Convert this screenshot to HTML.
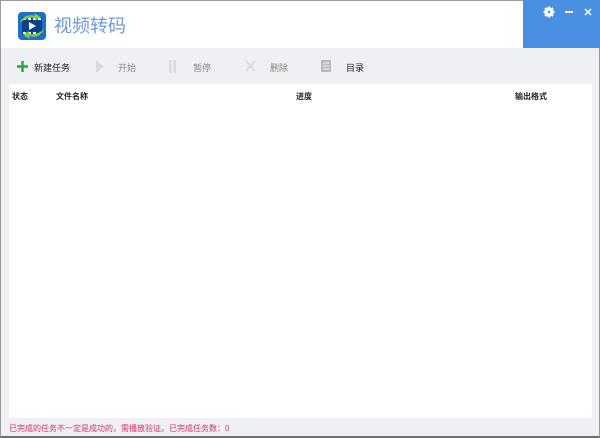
<!DOCTYPE html>
<html><head><meta charset="utf-8"><style>
*{margin:0;padding:0;box-sizing:border-box}
body{width:600px;height:438px;overflow:hidden;font-family:"Liberation Sans","Noto Sans CJK SC",sans-serif;background:#eef0f4;position:relative}
.win{position:absolute;left:0;top:0;width:600px;height:438px;border:1px solid #9a9a9a;border-bottom:2px solid #6f6f6f}
.top{position:absolute;left:1px;top:1px;width:598px;height:47px;background:#fff}
.blue{position:absolute;left:523px;top:0;width:77px;height:48px;background:#4a90e2}
.title{position:absolute;left:54px;top:15px;font-size:18px;line-height:22px;color:#6d9ad6;letter-spacing:0}
.tb{position:absolute;top:62px;font-size:9px;line-height:12px;color:#222}
.tb.dis{color:#888}
.table{position:absolute;left:9px;top:84px;width:583px;height:334px;background:#fff}
.th{position:absolute;top:91px;font-size:8px;line-height:11px;font-weight:bold;color:#222}
.status{position:absolute;left:9px;top:423px;font-size:8px;line-height:11px;color:#e0306a}
</style></head><body>
<div class="win"></div>
<div class="top"></div>
<div class="blue">
<svg style="position:absolute;left:20px;top:6px" width="12" height="12" viewBox="0 0 12 12"><circle cx="6" cy="6" r="3.5" fill="none" stroke="#fff" stroke-width="2.5"/><g stroke="#fff" stroke-width="2"><line x1="6" y1="0.5" x2="6" y2="11.5"/><line x1="0.5" y1="6" x2="11.5" y2="6"/><line x1="2" y1="2" x2="10" y2="10"/><line x1="10" y1="2" x2="2" y2="10"/></g><circle cx="6" cy="6" r="1.3" fill="#4a90e2"/></svg>
<div style="position:absolute;left:42px;top:11px;width:8px;height:2px;background:#fff"></div>
<svg style="position:absolute;left:61px;top:8px" width="8" height="8"><path d="M1 1L7 7M7 1L1 7" stroke="#fff" stroke-width="1.5"/></svg>
</div>
<svg style="position:absolute;left:17px;top:11px" width="30" height="30" viewBox="0 0 30 30"><rect x="1" y="1" width="28" height="28" rx="4" fill="#1a6fd0"/><rect x="5" y="6" width="20" height="18" fill="#0b3f8f"/><g fill="#fff"><rect x="6" y="7" width="3" height="2"/><rect x="11" y="7" width="3" height="2"/><rect x="16" y="7" width="3" height="2"/><rect x="21" y="7" width="3" height="2"/><rect x="6" y="21" width="3" height="2"/><rect x="11" y="21" width="3" height="2"/><rect x="16" y="21" width="3" height="2"/></g><path d="M12 11L19 15L12 19Z" fill="#fff"/><path d="M3 12C5 5 12 3 18 5L17 2L24 6L18 10L18 7C13 6 7 8 3 12Z" fill="#7cd13a"/><path d="M27 18C25 25 18 27 12 25L13 28L6 24L12 20L12 23C17 24 23 22 27 18Z" fill="#7cd13a"/></svg>
<div class="title">视频转码</div>
<svg style="position:absolute;left:17px;top:61px" width="11" height="11"><path d="M5.5 0V11M0 5.5H11" stroke="#2aa836" stroke-width="2.5"/></svg>
<div class="tb" style="left:34px">新建任务</div>
<svg style="position:absolute;left:96px;top:60px" width="8" height="13"><path d="M0 0L8 6.5L0 13Z" fill="#d8dadf"/></svg>
<div class="tb dis" style="left:118px">开始</div>
<svg style="position:absolute;left:169px;top:60px" width="7" height="13"><rect x="0" y="0" width="2.5" height="13" fill="#d8dadf"/><rect x="4.5" y="0" width="2.5" height="13" fill="#d8dadf"/></svg>
<div class="tb dis" style="left:193px">暂停</div>
<svg style="position:absolute;left:245px;top:60px" width="11" height="12"><path d="M1 1L10 11M10 1L1 11" stroke="#d8dadf" stroke-width="1.8"/></svg>
<div class="tb dis" style="left:270px">删除</div>
<svg style="position:absolute;left:321px;top:60px" width="10" height="12"><rect width="10" height="12" fill="#b8bbc2"/><g stroke="#eef0f4"><line x1="2" y1="3" x2="8" y2="3"/><line x1="2" y1="6" x2="8" y2="6"/><line x1="2" y1="9" x2="8" y2="9"/></g></svg>
<div class="tb" style="left:346px">目录</div>
<div class="table"></div>
<div class="th" style="left:12px">状态</div>
<div class="th" style="left:56px">文件名称</div>
<div class="th" style="left:296px">进度</div>
<div class="th" style="left:515px">输出格式</div>
<div class="status">已完成的任务不一定是成功的，需播放验证。已完成任务数：0</div>
</body></html>
